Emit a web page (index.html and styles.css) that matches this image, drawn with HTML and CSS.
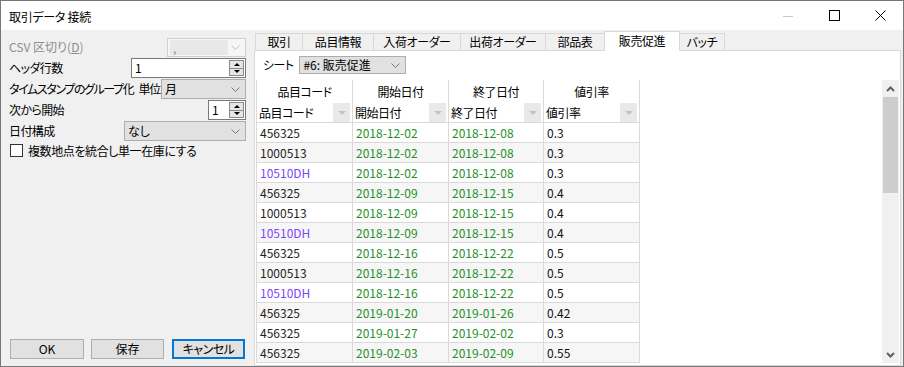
FILE: index.html
```html
<!DOCTYPE html>
<html lang="ja">
<head>
    <meta charset="UTF-8">
    <title>取引データ 接続</title>
    <link rel="stylesheet" href="styles.css">
</head>
<body>
    <div class="window">
        <div class="titlebar">
            <span class="title">取引データ 接続</span>
            <div class="caption-btns">
                <div class="caption-btn"><svg width="10" height="10"><line x1="0" y1="5.5" x2="10" y2="5.5" stroke="#c8c8c8"/></svg></div>
                <div class="caption-btn"><svg width="11" height="11"><rect x="0.5" y="0.5" width="10" height="10" fill="none" stroke="#000"/></svg></div>
                <div class="caption-btn"><svg width="11" height="11"><path d="M0.5 0.5 L10.5 10.5 M10.5 0.5 L0.5 10.5" stroke="#000" fill="none"/></svg></div>
            </div>
        </div>

        <div class="content">
            <!-- import options -->
            <div class="left">
                <div class="opt-row">
                    <span class="lbl disabled">CSV 区切り(<u>D</u>)</span>
                    <div class="combo disabled w-csv">
                        <span class="field">,</span>
                        <svg class="chev" width="9" height="5"><polyline points="0.5,0.5 4.5,4.5 8.5,0.5" fill="none" stroke="#c4c4c4"/></svg>
                    </div>
                </div>
                <div class="opt-row">
                    <span class="lbl">ヘッダ行数</span>
                    <div class="num w-header">
                        <span class="num-val">1</span>
                        <div class="spin"><span class="up"></span><span class="down"></span></div>
                    </div>
                </div>
                <div class="opt-row">
                    <span class="lbl tight">タイムスタンプのグループ化 単位</span>
                    <div class="combo w-unit">
                        <span class="combo-val">月</span>
                        <svg class="chev" width="9" height="5"><polyline points="0.5,0.5 4.5,4.5 8.5,0.5" fill="none" stroke="#777"/></svg>
                    </div>
                </div>
                <div class="opt-row">
                    <span class="lbl">次から開始</span>
                    <div class="num w-start">
                        <span class="num-val">1</span>
                        <div class="spin"><span class="up"></span><span class="down"></span></div>
                    </div>
                </div>
                <div class="opt-row">
                    <span class="lbl">日付構成</span>
                    <div class="combo w-date">
                        <span class="combo-val">なし</span>
                        <svg class="chev" width="9" height="5"><polyline points="0.5,0.5 4.5,4.5 8.5,0.5" fill="none" stroke="#777"/></svg>
                    </div>
                </div>
                <div class="check-row">
                    <span class="checkbox"></span>
                    <span>複数地点を統合し単一在庫にする</span>
                </div>

                <div class="buttons">
                    <button class="btn btn-ok">OK</button>
                    <button class="btn btn-save">保存</button>
                    <button class="btn btn-cancel">キャンセル</button>
                </div>
            </div>

            <!-- tabs -->
            <div class="tabctl">
                <div class="tab-strip">
                    <div class="tab" style="width:47px">取引</div>
                    <div class="tab" style="width:71px">品目情報</div>
                    <div class="tab" style="width:87px">入荷オーダー</div>
                    <div class="tab" style="width:85px">出荷オーダー</div>
                    <div class="tab" style="width:59px">部品表</div>
                    <div class="tab active" style="width:76px">販売促進</div>
                    <div class="tab last" style="width:45px">バッチ</div>
                </div>
                <div class="tab-panel">
                    <div class="sheet-row">
                        <span>シート</span>
                        <div class="combo sheet">
                            <span class="combo-val">#6: 販売促進</span>
                            <svg class="chev" width="9" height="5"><polyline points="0.5,0.5 4.5,4.5 8.5,0.5" fill="none" stroke="#777"/></svg>
                        </div>
                    </div>

                    <div class="grid-wrap">
                        <div class="grid" id="grid">
                            <div class="row head">
                                <div class="cell">品目コード</div>
                                <div class="cell">開始日付</div>
                                <div class="cell">終了日付</div>
                                <div class="cell">値引率</div>
                            </div>
                            <div class="row filter">
                                <div class="cell">品目コード<span class="drop"></span></div>
                                <div class="cell">開始日付<span class="drop"></span></div>
                                <div class="cell">終了日付<span class="drop"></span></div>
                                <div class="cell">値引率<span class="drop"></span></div>
                            </div>
                        </div>
                        <div class="vscroll">
                            <div class="sb-btn"><svg width="9" height="6"><polyline points="1,5 4.5,1.5 8,5" fill="none" stroke="#606060" stroke-width="2"/></svg></div>
                            <div class="sb-thumb"></div>
                            <div class="sb-track"></div>
                            <div class="sb-btn"><svg width="9" height="6"><polyline points="1,1 4.5,4.5 8,1" fill="none" stroke="#606060" stroke-width="2"/></svg></div>
                        </div>
                    </div>
                </div>
            </div>
        </div>
    </div>

    <script>
        const rows = [
            ['456325', '2018-12-02', '2018-12-08', '0.3'],
            ['1000513', '2018-12-02', '2018-12-08', '0.3'],
            ['10510DH', '2018-12-02', '2018-12-08', '0.3'],
            ['456325', '2018-12-09', '2018-12-15', '0.4'],
            ['1000513', '2018-12-09', '2018-12-15', '0.4'],
            ['10510DH', '2018-12-09', '2018-12-15', '0.4'],
            ['456325', '2018-12-16', '2018-12-22', '0.5'],
            ['1000513', '2018-12-16', '2018-12-22', '0.5'],
            ['10510DH', '2018-12-16', '2018-12-22', '0.5'],
            ['456325', '2019-01-20', '2019-01-26', '0.42'],
            ['456325', '2019-01-27', '2019-02-02', '0.3'],
            ['456325', '2019-02-03', '2019-02-09', '0.55']
        ];

        const grid = document.getElementById('grid');
        rows.forEach((r, i) => {
            const row = document.createElement('div');
            row.className = 'row data' + (i % 2 ? ' alt' : '');
            const codeClass = r[0].endsWith('DH') ? 'code purple' : 'code';
            row.innerHTML =
                `<div class="cell ${codeClass}">${r[0]}</div>` +
                `<div class="cell date">${r[1]}</div>` +
                `<div class="cell date">${r[2]}</div>` +
                `<div class="cell rate">${r[3]}</div>`;
            grid.appendChild(row);
        });
    </script>
</body>
</html>
```

FILE: styles.css
```css
* {
    box-sizing: border-box;
}

html, body {
    margin: 0;
    padding: 0;
}

body {
    font-family: "Noto Sans CJK JP", sans-serif;
    font-size: 12px;
    font-feature-settings: "palt";
    color: #000;
    background-color: #f0f0f0;
}

.window {
    width: 904px;
    height: 367px;
    border: 1px solid #777;
    display: flex;
    flex-direction: column;
    background-color: #f0f0f0;
}

/* title bar */
.titlebar {
    height: 29px;
    background-color: #fff;
    display: flex;
    align-items: center;
}

.title {
    flex: 1;
    padding-left: 8px;
    padding-top: 2px;
    line-height: 16px;
    letter-spacing: -0.3px;
}

.caption-btns {
    display: flex;
    height: 100%;
}

.caption-btn {
    width: 46px;
    display: flex;
    align-items: center;
    justify-content: center;
}

.caption-btn svg {
    display: block;
}

.content {
    flex: 1;
    display: flex;
    min-height: 0;
}

/* left options */
.left {
    width: 253px;
    padding: 7px 8px 7px 8px;
    display: flex;
    flex-direction: column;
}

.opt-row {
    height: 21px;
    display: flex;
    align-items: flex-start;
}

.lbl {
    line-height: 20px;
    white-space: nowrap;
    letter-spacing: -0.6px;
}

.lbl.tight {
    letter-spacing: -1.4px;
    word-spacing: 4px;
}

.lbl.disabled {
    color: #8d8d8d;
    letter-spacing: 0;
}

.combo {
    height: 20px;
    margin-left: auto;
    flex-shrink: 0;
    display: flex;
    align-items: center;
    background-color: #e1e1e1;
    border: 1px solid #adadad;
}

.combo-val {
    padding-left: 3px;
    line-height: 16px;
}

.chev {
    display: block;
    margin-left: auto;
    margin-right: 5px;
}

.combo.disabled {
    height: 19px;
    margin-top: 1px;
    background-color: #f6f6f6;
    border-color: #d0d0d0;
}

.combo.disabled .field {
    width: 58px;
    height: 15px;
    margin-left: 2px;
    padding-left: 3px;
    background-color: #e8e8e8;
    color: #8d8d8d;
    line-height: 15px;
}

.w-csv { width: 79px; }
.w-header { width: 115px; }
.w-unit { width: 85px; }
.w-start { width: 38px; }
.w-date { width: 122px; }

.num {
    height: 20px;
    margin-left: auto;
    flex-shrink: 0;
    display: flex;
    align-items: center;
    background-color: #fff;
    border: 1px solid #7a7a7a;
}

.num-val {
    padding-left: 3px;
    line-height: 16px;
}

.spin {
    width: 15px;
    height: 16px;
    margin-left: auto;
    margin-right: 1px;
    display: flex;
    flex-direction: column;
    border: 1px solid #8a8a8a;
    background-color: #e5e5e5;
}

.spin span {
    flex: 1;
    display: flex;
    align-items: center;
    justify-content: center;
}

.spin .up {
    border-bottom: 1px solid #8a8a8a;
}

.spin .up::after,
.spin .down::after {
    content: "";
    width: 0;
    height: 0;
    border-left: 3px solid transparent;
    border-right: 3px solid transparent;
}

.spin .up::after {
    border-bottom: 3px solid #000;
}

.spin .down::after {
    border-top: 3px solid #000;
}

.check-row {
    display: flex;
    align-items: center;
    gap: 5px;
    margin-top: 1px;
    height: 15px;
    letter-spacing: -0.4px;
}

.checkbox {
    width: 13px;
    height: 13px;
    border: 1px solid #333;
    background-color: #fff;
    margin-left: 1px;
}

.buttons {
    margin-top: auto;
    display: flex;
    padding-left: 1px;
}

.btn {
    height: 20px;
    padding: 0;
    font-family: inherit;
    font-size: 12px;
    font-feature-settings: "palt";
    background-color: #e1e1e1;
    border: 1px solid #adadad;
    color: #000;
    line-height: 16px;
}

.btn-ok { width: 74px; }
.btn-save { width: 73px; margin-left: 7px; }
.btn-cancel {
    width: 73px;
    margin-left: 8px;
    border: 2px solid #0078d7;
    letter-spacing: -0.5px;
}

/* tab control */
.tabctl {
    width: 647px;
    margin-top: 1px;
    display: flex;
    flex-direction: column;
}

.tab-strip {
    height: 19px;
    display: flex;
    align-items: flex-end;
    padding-left: 1px;
}

.tab {
    height: 17px;
    border: 1px solid #d9d9d9;
    border-bottom: none;
    border-right: none;
    background-color: #f0f0f0;
    text-align: center;
    line-height: 15px;
    white-space: nowrap;
    letter-spacing: -0.4px;
}

.tab.active {
    height: 20px;
    margin-bottom: -1px;
    background-color: #fff;
    border-right: 1px solid #d9d9d9;
    line-height: 17px;
    position: relative;
    z-index: 1;
}

.tab.last {
    border-left: none;
    border-right: 1px solid #d9d9d9;
    width: 45px;
}

.tab-panel {
    flex: 1;
    background-color: #fff;
    border: 1px solid #d9d9d9;
    padding: 0 1px 2px 1px;
    display: flex;
    flex-direction: column;
}

.sheet-row {
    height: 29px;
    display: flex;
    align-items: flex-start;
    padding-left: 7px;
    padding-top: 5px;
}

.sheet-row > span {
    line-height: 18px;
    letter-spacing: -0.6px;
}

.combo.sheet {
    width: 107px;
    height: 18px;
    margin-left: 6px;
}

/* data grid */
.grid-wrap {
    height: 283px;
    display: flex;
}

.grid {
    flex: 1;
}

.row {
    display: grid;
    grid-template-columns: 97px 96px 95px 96px;
}

.cell {
    border-right: 1px solid #dadada;
    white-space: nowrap;
    overflow: hidden;
}

.row .cell:first-child {
    border-left: 1px solid #dadada;
}

.row.head .cell {
    height: 23px;
    text-align: center;
    line-height: 24px;
    letter-spacing: -0.5px;
}

.row.filter .cell {
    height: 20px;
    display: flex;
    align-items: flex-start;
    padding-left: 2px;
    line-height: 19px;
    border-bottom: 1px solid #dadada;
    letter-spacing: -0.5px;
}

.drop {
    width: 17px;
    height: 19px;
    margin-left: auto;
    margin-right: 2px;
    background-color: #e9e9e9;
    display: flex;
    align-items: center;
    justify-content: center;
}

.drop::after {
    content: "";
    width: 0;
    height: 0;
    border-left: 4px solid transparent;
    border-right: 4px solid transparent;
    border-top: 4px solid #c4c4c4;
}

.row.data .cell {
    height: 20px;
    padding-left: 3px;
    line-height: 19px;
    border-bottom: 1px solid #dadada;
}

.row.data.alt .cell {
    background-color: #f6f6f6;
}

.cell.code {
    color: #1e1e1e;
    padding-left: 2px;
}

.cell.purple {
    color: #7e45ff;
}

.cell.date {
    color: #24902a;
}

.cell.rate {
    color: #111;
}

/* scrollbar */
.vscroll {
    width: 17px;
    display: flex;
    flex-direction: column;
    background-color: #f0f0f0;
}

.sb-btn {
    height: 17px;
    display: flex;
    align-items: center;
    justify-content: center;
}

.sb-btn svg {
    display: block;
}

.sb-thumb {
    height: 96px;
    margin: 0 1px;
    background-color: #cdcdcd;
}

.sb-track {
    flex: 1;
}
```
